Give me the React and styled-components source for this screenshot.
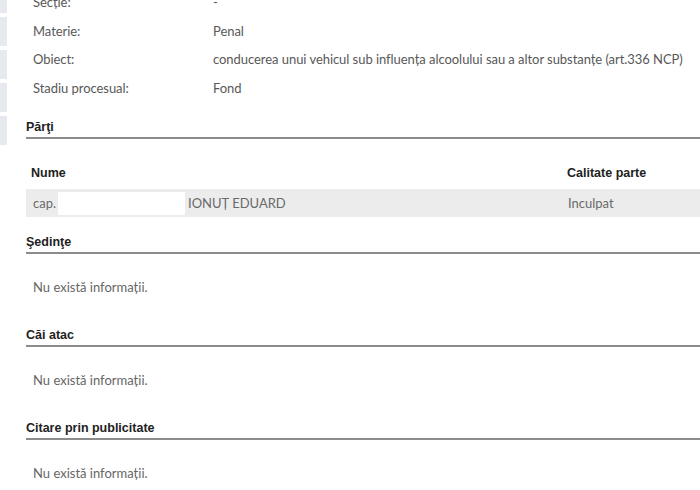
import React from "react";
import styled, { createGlobalStyle } from "styled-components";

const Global = createGlobalStyle`
  html, body { margin: 0; padding: 0; background: #ffffff; }
  body { width: 700px; height: 490px; overflow: hidden; }
`;

const Page = styled.div`
  display: flex;
  align-items: flex-start;
  gap: 19px;
  width: 700px;
  height: 490px;
  overflow: hidden;
`;

const Rail = styled.div`
  display: flex;
  flex-direction: column;
  gap: 4px;
  width: 7px;
  margin-top: -16px;
  flex-shrink: 0;
`;

const RailStrip = styled.div`
  height: 29px;
  background: #e6e9ee;
`;

const Main = styled.div`
  flex: 1;
  min-width: 0;
  display: flex;
  flex-direction: column;
  margin-top: -12px;
`;

const InfoRow = styled.div`
  display: flex;
  height: 28.5px;
  align-items: center;
  padding-left: 7px;
  font-family: Lato, "Liberation Sans", sans-serif;
  font-size: 13px;
  letter-spacing: -0.05px;
  color: #585858;
  white-space: nowrap;
`;

const InfoKey = styled.span`
  width: 180px;
  flex-shrink: 0;
`;

const SectionTitle = styled.div`
  font-family: "Liberation Sans", Arial, sans-serif;
  font-weight: bold;
  font-size: 12.5px;
  color: #222222;
  height: 21px;
  line-height: 18px;
  border-bottom: 2px solid #8c8c8c;
  margin-top: ${(p) => p.$top || 0}px;
  box-sizing: border-box;
`;

const TableHead = styled.div`
  display: grid;
  grid-template-columns: 536px 1fr;
  padding: 0 5px;
  height: 32px;
  align-items: center;
  margin-top: 18px;
  font-family: "Liberation Sans", Arial, sans-serif;
  font-weight: bold;
  font-size: 12.5px;
  color: #222222;
`;

const TableRow = styled.div`
  display: grid;
  grid-template-columns: 535px 1fr;
  padding: 0 5px 0 7px;
  height: 28px;
  align-items: center;
  background: #ececec;
  font-family: Lato, "Liberation Sans", sans-serif;
  font-size: 13px;
  color: #6a6a6a;
`;

const NameCell = styled.div`
  display: flex;
  align-items: center;
  white-space: nowrap;
`;

const Redacted = styled.span`
  display: inline-block;
  width: 127px;
  height: 23px;
  background: #ffffff;
  margin: 0 3px 0 2px;
`;

const Empty = styled.div`
  padding: 0 0 5px 7px;
  height: 70px;
  box-sizing: border-box;
  display: flex;
  align-items: center;
  font-family: Lato, "Liberation Sans", sans-serif;
  font-size: 13px;
  color: #666666;
`;

const info = [
  ["Secție:", "-"],
  ["Materie:", "Penal"],
  ["Obiect:", "conducerea unui vehicul sub influența alcoolului sau a altor substanțe (art.336 NCP)"],
  ["Stadiu procesual:", "Fond"],
];

export default function App() {
  return (
    <>
      <Global />
      <Page>
        <Rail>
          {[0, 1, 2, 3, 4].map((i) => (
            <RailStrip key={i} />
          ))}
        </Rail>
        <Main>
          {info.map(([k, v]) => (
            <InfoRow key={k}>
              <InfoKey>{k}</InfoKey>
              <span>{v}</span>
            </InfoRow>
          ))}
          <SectionTitle $top={16}>Părţi</SectionTitle>
          <TableHead>
            <span>Nume</span>
            <span>Calitate parte</span>
          </TableHead>
          <TableRow>
            <NameCell>
              cap.<Redacted />IONUȚ EDUARD
            </NameCell>
            <span>Inculpat</span>
          </TableRow>
          <SectionTitle $top={16}>Şedinţe</SectionTitle>
          <Empty>Nu există informații.</Empty>
          <SectionTitle $top={2}>Căi atac</SectionTitle>
          <Empty>Nu există informații.</Empty>
          <SectionTitle $top={2}>Citare prin publicitate</SectionTitle>
          <Empty>Nu există informații.</Empty>
        </Main>
      </Page>
    </>
  );
}
